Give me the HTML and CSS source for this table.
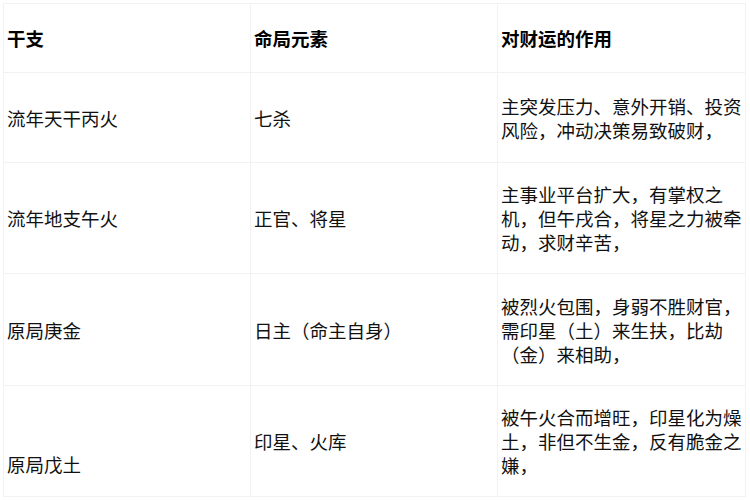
FILE: index.html
```html
<!DOCTYPE html>
<html lang="zh">
<head>
<meta charset="utf-8">
<link rel="stylesheet" href="styles.css">
</head>
<body>
<table class="tbl">
  <colgroup><col class="c1"><col class="c2"><col class="c3"></colgroup>
  <tr class="r-head">
    <th>干支</th><th>命局元素</th><th>对财运的作用</th>
  </tr>
  <tr class="r1">
    <td>流年天干丙火</td><td>七杀</td><td>主突发压力、意外开销、投资风险，冲动决策易致破财，</td>
  </tr>
  <tr class="r2">
    <td>流年地支午火</td><td>正官、将星</td><td>主事业平台扩大，有掌权之机，但午戌合，将星之力被牵动，求财辛苦，</td>
  </tr>
  <tr class="r3">
    <td>原局庚金</td><td>日主（命主自身）</td><td>被烈火包围，身弱不胜财官，需印星（土）来生扶，比劫（金）来相助，</td>
  </tr>
  <tr class="r4">
    <td class="bottom">原局戊土</td><td>印星、火库</td><td>被午火合而增旺，印星化为燥土，非但不生金，反有脆金之嫌，</td>
  </tr>
</table>
</body>
</html>
```
FILE: styles.css
```css
html, body {
  margin: 0;
  padding: 0;
  background: #ffffff;
}
body {
  padding: 3px 0 0 3px;
  font-family: "Noto Sans CJK SC", "Noto Sans", sans-serif;
  color: #111111;
}
.tbl {
  border-collapse: collapse;
  width: 742px;
  table-layout: fixed;
  font-size: 18.5px;
  line-height: 24px;
}
.c1 { width: 247px; }
.c2 { width: 247px; }
.c3 { width: 248px; }
.tbl th, .tbl td {
  border: 1px solid #f2f2f2;
  padding: 0 0 0 3px;
  text-align: left;
  vertical-align: middle;
}
.tbl th {
  font-weight: bold;
  color: #000000;
}
.r-head { height: 69px; }
.r1 { height: 90px; }
.r2 { height: 111px; }
.r3 { height: 112px; }
.r4 { height: 111px; }
.tbl td.bottom {
  vertical-align: bottom;
  padding-bottom: 20px;
}
```
